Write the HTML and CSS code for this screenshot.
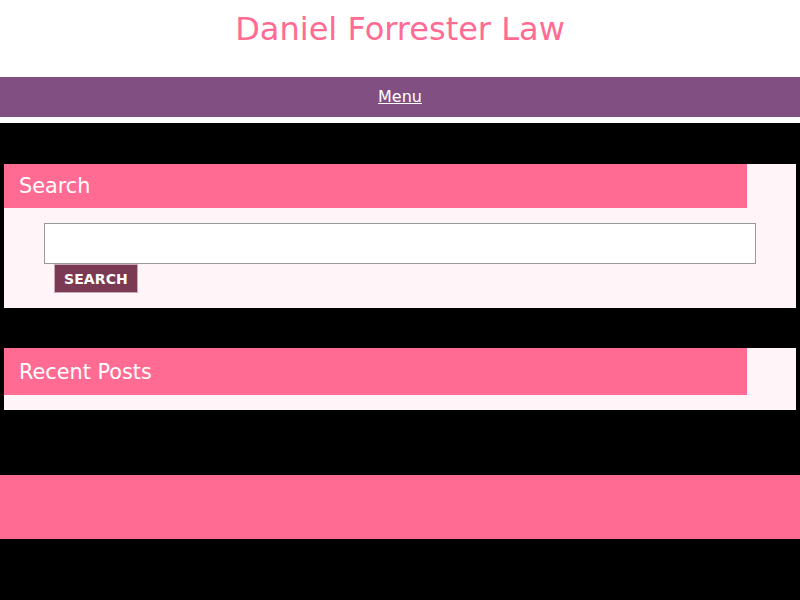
FILE: index.html
```html
<!DOCTYPE html>
<html>
<head>
<meta charset="utf-8">
<link rel="stylesheet" href="styles.css">
</head>
<body>
<header class="site-header">
  <h1 class="site-title">Daniel Forrester Law</h1>
</header>
<nav class="main-nav"><a href="#">Menu</a></nav>
<div class="content">
  <section class="widget">
    <h2 class="widget-title">Search</h2>
    <form class="search-form">
      <input class="search-input" type="text">
      <button class="search-btn" type="button">Search</button>
    </form>
  </section>
  <section class="widget widget-recent">
    <h2 class="widget-title">Recent Posts</h2>
  </section>
  <footer class="site-footer"></footer>
</div>
</body>
</html>
```

FILE: styles.css
```css
html, body {
  margin: 0;
  padding: 0;
}
body {
  background: #000;
  font-family: "DejaVu Sans", sans-serif;
}
.site-header {
  background: #fff;
  height: 77px;
  display: flex;
  justify-content: center;
}
.site-title {
  margin: 0;
  padding-top: 10px;
  font-size: 32px;
  font-weight: normal;
  line-height: 38px;
  color: #ff6b93;
}
.main-nav {
  background: #824f83;
  height: 40px;
  display: flex;
  align-items: center;
  justify-content: center;
  border-bottom: 6px solid #fff;
}
.main-nav a {
  color: #fff;
  font-size: 16px;
  text-decoration: underline;
  padding-bottom: 2px;
}
.content {
  padding-top: 41px;
}
.widget {
  background: #fff5f8;
  margin: 0 4px 40px;
}
.widget-title {
  margin: 0;
  width: 743px;
  box-sizing: border-box;
  height: 44px;
  background: #ff6b93;
  color: #fff;
  font-weight: normal;
  font-size: 20.8px;
  line-height: 44px;
  padding-left: 15px;
}
.widget-recent .widget-title {
  height: 47px;
  line-height: 47px;
  padding-top: 1px;
}
.widget-recent {
  height: 62px;
  margin-bottom: 65px;
}
.search-form {
  padding: 15px 40px 15px 40px;
}
.search-input {
  display: block;
  width: 100%;
  box-sizing: border-box;
  height: 41px;
  margin: 0;
  border: 1px solid #9a9a9a;
  background: #fff;
}
.search-btn {
  display: block;
  margin: 0 0 0 10px;
  height: 29px;
  padding: 0 9px;
  background: #7b3a53;
  color: #fff;
  border: 1px solid #c9a9b4;
  font-family: "DejaVu Sans", sans-serif;
  font-weight: bold;
  font-size: 14px;
  letter-spacing: 0.1px;
  text-transform: uppercase;
}
.site-footer {
  background: #ff6b93;
  height: 64px;
}
```
